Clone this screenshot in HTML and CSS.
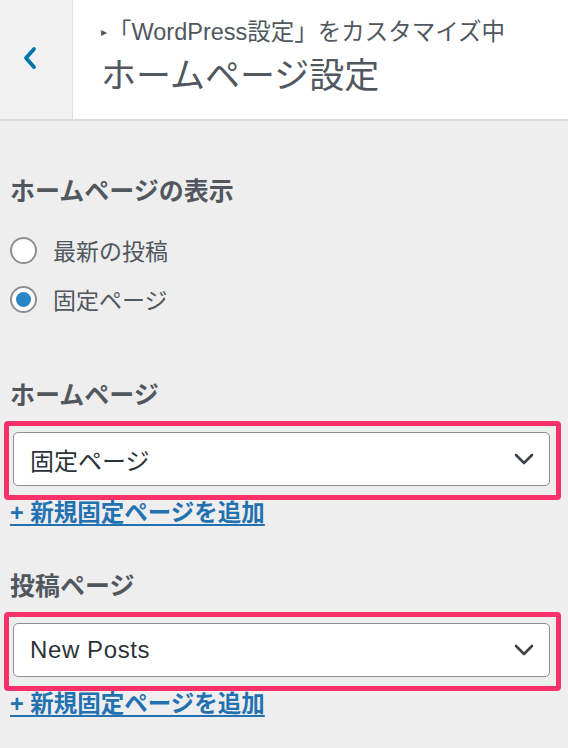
FILE: index.html
```html
<!DOCTYPE html>
<html lang="ja">

<head>
    <meta charset="UTF-8">
    <meta name="viewport" content="width=device-width, initial-scale=1.0">
    <title>ホームページ設定</title>
    <link rel="stylesheet" href="styles.css">
</head>

<body>
    <header class="section-header">
        <button class="back-button" aria-label="戻る">
            <svg width="16" height="26" viewBox="0 0 16 26">
                <path d="M12 4 L4 13 L12 22" fill="none" stroke="#0073aa" stroke-width="3.8" stroke-linecap="round" stroke-linejoin="round"/>
            </svg>
        </button>
        <div class="header-title">
            <p class="customizing"><span class="arrow">&#9656;</span>「WordPress設定」をカスタマイズ中</p>
            <h1>ホームページ設定</h1>
        </div>
    </header>

    <main class="controls">
        <!-- ホームページの表示 -->
        <section class="control">
            <h2>ホームページの表示</h2>
            <label class="radio-row">
                <input type="radio" name="show_on_front" value="posts">
                <span>最新の投稿</span>
            </label>
            <label class="radio-row">
                <input type="radio" name="show_on_front" value="page" checked>
                <span>固定ページ</span>
            </label>
        </section>

        <section class="control">
            <h2>ホームページ</h2>
            <div class="highlight">
                <div class="select-box">
                    <span>固定ページ</span>
                    <svg width="22" height="14" viewBox="0 0 22 14">
                        <path d="M3 3 L11 11 L19 3" fill="none" stroke="#3c434a" stroke-width="2.6" stroke-linecap="round" stroke-linejoin="round"/>
                    </svg>
                </div>
            </div>
            <a href="#" class="add-new">+ 新規固定ページを追加</a>
        </section>

        <section class="control">
            <h2>投稿ページ</h2>
            <div class="highlight">
                <div class="select-box">
                    <span class="latin">New Posts</span>
                    <svg width="22" height="14" viewBox="0 0 22 14">
                        <path d="M3 3 L11 11 L19 3" fill="none" stroke="#3c434a" stroke-width="2.6" stroke-linecap="round" stroke-linejoin="round"/>
                    </svg>
                </div>
            </div>
            <a href="#" class="add-new">+ 新規固定ページを追加</a>
        </section>
    </main>
</body>

</html>
```

FILE: styles.css
```css
body, h1, h2, p {
    margin: 0;
    padding: 0;
}

* {
    box-sizing: border-box;
}

body {
    font-family: "Liberation Sans", "Noto Sans CJK JP", sans-serif;
    background-color: #eeeeee;
    color: #50575e;
    width: 568px;
    height: 748px;
    overflow: hidden;
}

/* Header */
.section-header {
    display: flex;
    height: 121px;
    border-bottom: 2px solid #dcdcde;
}

.back-button {
    width: 72px;
    background-color: #f1f1f1;
    border: none;
    padding: 0 12px 4px 0;
    display: flex;
    align-items: center;
    justify-content: center;
    cursor: pointer;
}

.header-title {
    flex: 1;
    background-color: #fff;
    border-left: 1px solid #dddddd;
    padding: 17px 0 0 28px;
}

.customizing {
    font-size: 23.5px;
    line-height: 30px;
    color: #50575e;
}

.customizing .arrow {
    font-size: 12px;
    display: inline-block;
    vertical-align: 4px;
    margin-right: 1px;
}

.header-title h1 {
    font-size: 35px;
    font-weight: normal;
    line-height: 44px;
    margin-top: 7px;
    color: #50575e;
}

/* Controls */
.controls {
    padding: 0 10px;
}

.control {
    margin-top: 42px;
}

.control:first-child {
    margin-top: 53px;
}

.control:nth-child(2) {
    margin-top: 59px;
}

.control h2 {
    font-size: 25px;
    font-weight: bold;
    line-height: 34px;
    color: #50575e;
}

.radio-row {
    display: flex;
    align-items: center;
    height: 40px;
    margin-top: 9px;
    font-size: 23px;
    color: #50575e;
}

.radio-row:first-of-type {
    margin-top: 22px;
}

.radio-row input {
    appearance: none;
    -webkit-appearance: none;
    width: 27px;
    height: 27px;
    margin: 0 16px 0 0;
    border: 2px solid #8c8f94;
    border-radius: 50%;
    background-color: #fff;
    display: flex;
    align-items: center;
    justify-content: center;
}

.radio-row input:checked::before {
    content: "";
    width: 15px;
    height: 15px;
    border-radius: 50%;
    background-color: #2a86c6;
}

.highlight {
    margin: 9px 0 0 -6px;
    width: 557px;
    border: 5px solid #f7326b;
    border-radius: 4px;
    padding: 6px 6px 9px 4px;
}

.select-box {
    display: flex;
    align-items: center;
    justify-content: space-between;
    height: 54px;
    border: 1px solid #8c8f94;
    border-radius: 5px;
    background-color: #fff;
    padding: 0 14px 0 16px;
    font-size: 24px;
    color: #2c3338;
}

.select-box .latin {
    letter-spacing: 0.6px;
}

.add-new {
    display: inline-block;
    font-size: 23.5px;
    font-weight: bold;
    line-height: 27px;
    color: #2271b1;
    text-decoration: underline;
    text-decoration-thickness: 2px;
    text-underline-offset: 3px;
}
```
